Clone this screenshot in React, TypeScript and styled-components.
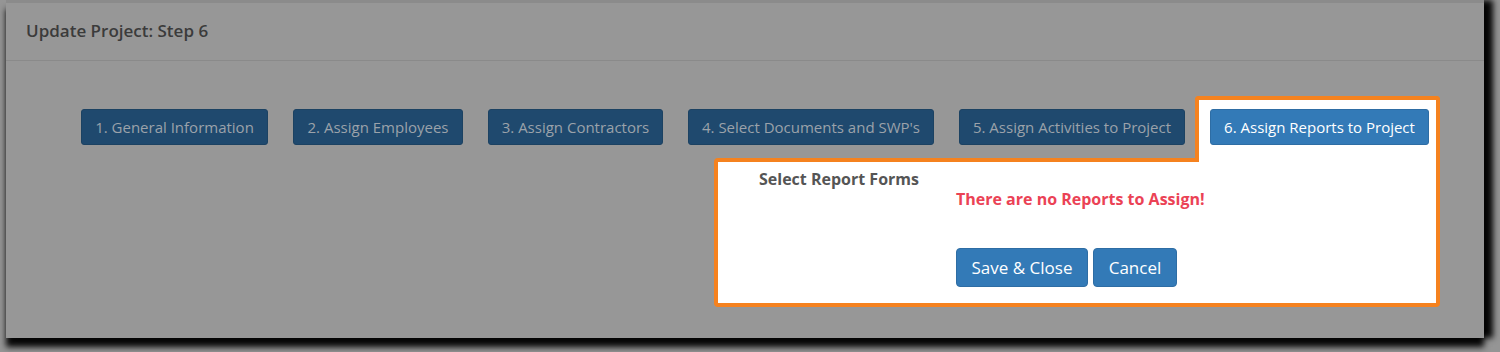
import React from 'react';
import styled, { createGlobalStyle } from 'styled-components';

const steps = [
  { label: '1. General Information', width: 187 },
  { label: '2. Assign Employees', width: 170 },
  { label: '3. Assign Contractors', width: 175 },
  { label: "4. Select Documents and SWP's", width: 246 },
  { label: '5. Assign Activities to Project', width: 226 },
  { label: '6. Assign Reports to Project', width: 219 },
];

const ACTIVE_STEP = 5;

export default function App() {
  return (
    <>
      <GlobalStyle />
      <Screen>
        <Modal>
          <Header>
            <Title>Update Project: Step 6</Title>
          </Header>
          <Body>
            <StepRow>
              {steps.map((step, i) =>
                i === ACTIVE_STEP ? (
                  <ActiveTab key={step.label}>
                    <StepButton $w={step.width} $active>
                      {step.label}
                    </StepButton>
                  </ActiveTab>
                ) : (
                  <StepButton key={step.label} $w={step.width}>
                    {step.label}
                  </StepButton>
                )
              )}
            </StepRow>
            <StepPanel>
              <FieldLabel>Select Report Forms</FieldLabel>
              <EmptyMessage>There are no Reports to Assign!</EmptyMessage>
              <Actions>
                <ActionButton $w={132}>Save &amp; Close</ActionButton>
                <ActionButton $w={84}>Cancel</ActionButton>
              </Actions>
            </StepPanel>
          </Body>
        </Modal>
      </Screen>
    </>
  );
}

const GlobalStyle = createGlobalStyle`
  html, body {
    margin: 0;
    padding: 0;
    background: #959595;
    font-family: "Open Sans", "Liberation Sans", sans-serif;
  }
  * {
    box-sizing: border-box;
  }
`;

const Screen = styled.div`
  width: 1500px;
  height: 352px;
  overflow: hidden;
  padding-left: 6px;
`;

const Modal = styled.div`
  width: 1478px;
  height: 338px;
  background: #979797;
  border-top: 3px solid #8b8b8b;
  box-shadow: 9px 0 6px rgba(0, 0, 0, 0.97), 0 9px 6px rgba(0, 0, 0, 0.95);
  display: flex;
  flex-direction: column;
`;

const Header = styled.div`
  padding: 17px 20px 18px;
  border-bottom: 1px solid #8a8a8a;
`;

const Title = styled.h4`
  margin: 0;
  font-size: 17px;
  line-height: 22px;
  font-weight: 600;
  color: #3b3b3b;
`;

const Body = styled.div`
  display: flex;
  flex-direction: column;
  padding: 48px 44px 0 75px;
`;

const StepRow = styled.div`
  display: flex;
  align-items: flex-start;
  gap: 25px;
`;

const StepButton = styled.button<{ $w: number; $active?: boolean }>`
  width: ${({ $w }) => $w}px;
  height: 36px;
  padding: 0;
  border-radius: 3px;
  border: 1px solid ${({ $active }) => ($active ? '#2e6da4' : '#1c4262')};
  background: ${({ $active }) => ($active ? '#337ab7' : '#1f496e')};
  color: ${({ $active }) => ($active ? '#ffffff' : '#9ba2aa')};
  font-family: inherit;
  font-size: 15px;
  white-space: nowrap;
`;

const ActiveTab = styled.div`
  position: relative;
  z-index: 1;
  margin: -13px -11px 0 -15px;
  padding: 9px 7px 17px 11px;
  background: #ffffff;
  border: 4px solid #f5821f;
  border-bottom: 0;
  border-radius: 4px 4px 0 0;
`;

const StepPanel = styled.div`
  align-self: flex-end;
  width: 726px;
  height: 149px;
  margin-top: -4px;
  padding-top: 7px;
  background: #ffffff;
  border: 4px solid #f5821f;
  border-radius: 4px 0 4px 4px;
  display: grid;
  grid-template-columns: 238px 1fr;
  align-content: start;
`;

const FieldLabel = styled.div`
  grid-column: 1 / -1;
  padding-left: 41px;
  font-size: 16px;
  line-height: 20px;
  font-weight: 700;
  color: #555555;
`;

const EmptyMessage = styled.div`
  grid-column: 2;
  font-size: 16px;
  line-height: 20px;
  font-weight: 700;
  color: #eb4255;
`;

const Actions = styled.div`
  grid-column: 2;
  margin-top: 39px;
  display: flex;
  gap: 5px;
`;

const ActionButton = styled.button<{ $w: number }>`
  width: ${({ $w }) => $w}px;
  height: 39px;
  padding: 0;
  border-radius: 4px;
  border: 1px solid #2e6da4;
  background: #337ab7;
  color: #ffffff;
  font-family: inherit;
  font-size: 17px;
`;
